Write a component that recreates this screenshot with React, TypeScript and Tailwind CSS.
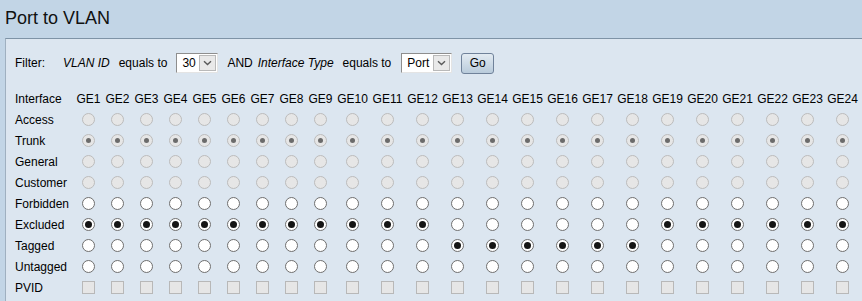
import React from "react"

const ports = Array.from({ length: 24 }, (_, i) => `GE${i + 1}`)

type Row = {
  label: string
  kind: "radio" | "check"
  disabled: boolean
  checked: (i: number) => boolean
}

const rows: Row[] = [
  { label: "Access", kind: "radio", disabled: true, checked: () => false },
  { label: "Trunk", kind: "radio", disabled: true, checked: () => true },
  { label: "General", kind: "radio", disabled: true, checked: () => false },
  { label: "Customer", kind: "radio", disabled: true, checked: () => false },
  { label: "Forbidden", kind: "radio", disabled: false, checked: () => false },
  { label: "Excluded", kind: "radio", disabled: false, checked: (i) => i < 12 || i > 17 },
  { label: "Tagged", kind: "radio", disabled: false, checked: (i) => i >= 12 && i <= 17 },
  { label: "Untagged", kind: "radio", disabled: false, checked: () => false },
  { label: "PVID", kind: "check", disabled: true, checked: () => false },
]

function Radio({ checked, disabled }: { checked: boolean; disabled: boolean }) {
  if (disabled) {
    return (
      <span className="flex h-[13px] w-[13px] items-center justify-center rounded-full border border-[#bcbcbc] bg-[#e6e6e6]">
        {checked && <span className="h-[5px] w-[5px] rounded-full bg-[#6b6b6b]" />}
      </span>
    )
  }
  return (
    <span className="flex h-[13px] w-[13px] items-center justify-center rounded-full border border-[#6f6f6f] bg-white">
      {checked && <span className="h-[7px] w-[7px] rounded-full bg-[#151515]" />}
    </span>
  )
}

function Chevron() {
  return (
    <svg width="9" height="6" viewBox="0 0 9 6">
      <path d="M1 1.2 L4.5 4.5 L8 1.2" fill="none" stroke="#5a5a5a" strokeWidth="1.4" />
    </svg>
  )
}

function Select({ value, width }: { value: string; width: string }) {
  return (
    <div
      className={`flex h-[20px] ${width} items-center justify-between border border-t-[#8e8e8e] border-l-[#8e8e8e] border-r-[#e4e4e4] border-b-[#e4e4e4] bg-white pl-[5px] pr-px`}
    >
      <span>{value}</span>
      <span className="flex h-[16px] w-[17px] items-center justify-center border border-[#b9b9b9] bg-[#e9e9e9]">
        <Chevron />
      </span>
    </div>
  )
}

export default function App() {
  return (
    <div className="h-[301px] w-[862px] overflow-hidden bg-[#c2d5e6] font-['Liberation_Sans',Arial,sans-serif] text-[12px] text-black">
      <div className="h-[38px] pl-[5px] pt-[7px] text-[18px] leading-[22px] text-[#111]">Port to VLAN</div>
      <div className="ml-[5px] h-[263px] border-l border-t border-l-[#9fb0c0] border-t-[#7e93a6] bg-[#dce6f0] pl-[9px] pt-[13px]">
        <div className="flex h-[22px] items-center leading-[14px]">
          <span>Filter:</span>
          <span className="ml-[18px] italic">VLAN ID</span>
          <span className="ml-[9px]">equals to</span>
          <div className="ml-[9px]">
            <Select value="30" width="w-[42px]" />
          </div>
          <span className="ml-[9px]">AND</span>
          <span className="ml-[5px] italic">Interface Type</span>
          <span className="ml-[9px]">equals to</span>
          <div className="ml-[10px]">
            <Select value="Port" width="w-[51px]" />
          </div>
          <button className="ml-[9px] h-[21px] w-[33px] rounded-[3px] border border-[#70829a] bg-linear-to-b from-[#e3ebf2] to-[#b9cbdb] text-[12px] leading-none">
            Go
          </button>
        </div>

        <div className="mt-[14px] grid grid-cols-[59px_repeat(9,29px)_repeat(15,35px)] leading-[14px]">
          <div className="flex h-[21px] items-center">Interface</div>
          {ports.map((p) => (
            <div key={p} className="flex h-[21px] items-center justify-center whitespace-nowrap">
              {p}
            </div>
          ))}
          {rows.map((row) => (
            <React.Fragment key={row.label}>
              <div className="flex h-[21px] items-center whitespace-nowrap">{row.label}</div>
              {ports.map((p, i) => (
                <div key={p} className="flex h-[21px] items-center justify-center">
                  {row.kind === "radio" ? (
                    <Radio checked={row.checked(i)} disabled={row.disabled} />
                  ) : (
                    <span className="h-[13px] w-[13px] border border-[#b8b8b8] bg-[#e6e6e6]" />
                  )}
                </div>
              ))}
            </React.Fragment>
          ))}
        </div>
      </div>
    </div>
  )
}
